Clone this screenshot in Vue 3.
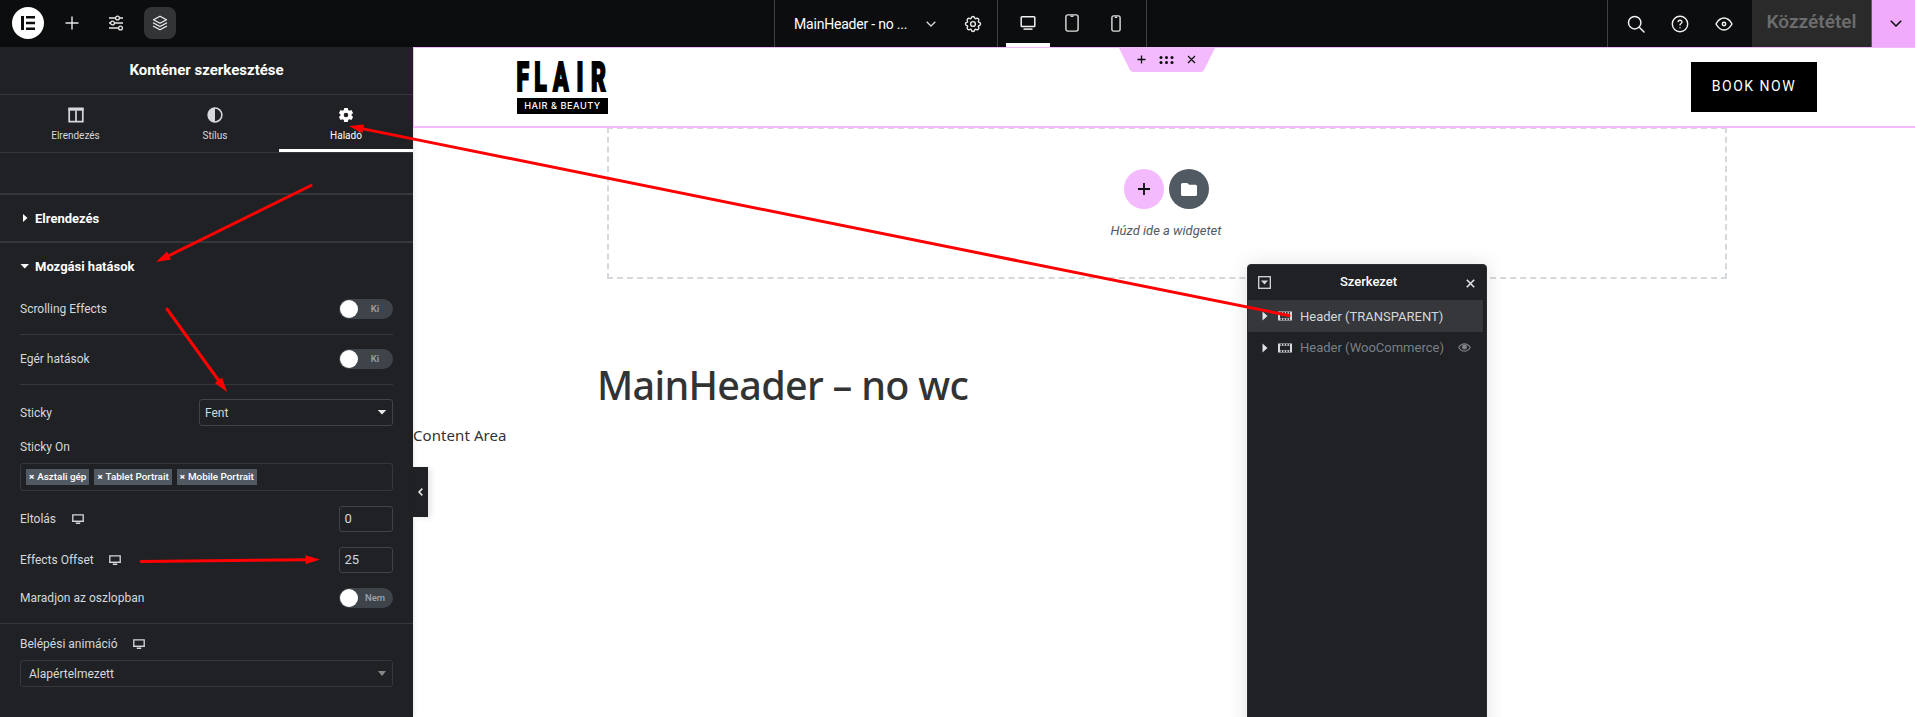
<script setup>
const devices = [
  { name: 'desktop', active: true },
  { name: 'tablet', active: false },
  { name: 'mobile', active: false }
]
const tags = ['Asztali gép', 'Tablet Portrait', 'Mobile Portrait']
const layers = [
  { label: 'Header (TRANSPARENT)', selected: true },
  { label: 'Header (WooCommerce)', selected: false }
]
const arrows = [
  { x1: 1289, y1: 315.5, x2: 349, y2: 126 },
  { x1: 311, y1: 185.5, x2: 156, y2: 262 },
  { x1: 167, y1: 309, x2: 227, y2: 392 },
  { x1: 141, y1: 561.5, x2: 320, y2: 559.5 }
].map((a) => {
  const len = Math.hypot(a.x2 - a.x1, a.y2 - a.y1)
  const ux = (a.x2 - a.x1) / len
  const uy = (a.y2 - a.y1) / len
  const bx = a.x2 - ux * 14.5
  const by = a.y2 - uy * 14.5
  return {
    line: { x1: a.x1, y1: a.y1, x2: bx, y2: by },
    head: `${a.x2},${a.y2} ${bx - uy * 4.5},${by + ux * 4.5} ${bx + uy * 4.5},${by - ux * 4.5}`
  }
})
</script>

<template>
  <div class="editor">
    <header class="topbar">
      <div class="tools">
        <svg class="logo" viewBox="0 0 32 32"><circle cx="16" cy="16" r="16" fill="#fff"/><path d="M9 9h3v14H9zM14 9h9v2.6h-9zM14 14.7h9v2.6h-9zM14 20.4h9V23h-9z" fill="#0c0d0e"/></svg>
        <div class="tool"><svg width="14" height="14" viewBox="0 0 14 14" fill="none" stroke="#e8e8e8" stroke-width="1.4"><path d="M7 .5v13M.5 7h13"/></svg></div>
        <div class="tool"><svg width="16" height="16" viewBox="0 0 16 16" fill="none" stroke="#e8e8e8" stroke-width="1.3"><path d="M1 3h6.500M11.500 3H15M1 8h1.500M6.500 8H15M1 13h9.500M14.500 13h.5"/><circle cx="9.500" cy="3" r="1.900"/><circle cx="4.500" cy="8" r="1.900"/><circle cx="12.500" cy="13" r="1.900"/></svg></div>
        <div class="tool on"><svg width="16" height="16" viewBox="0 0 16 16" fill="none" stroke="#f0f0f0" stroke-width="1.300" stroke-linejoin="round" stroke-linecap="round"><path d="M8 1.200 14.500 4.700 8 8.200 1.500 4.700zM1.500 8 8 11.500 14.500 8M1.500 11.200 8 14.700l6.500-3.500"/></svg></div>
      </div>
      <div class="doc">
        <span class="docname">MainHeader - no ...</span>
        <svg class="chev" width="10" height="6" viewBox="0 0 10 6" fill="none" stroke="#d5d8dc" stroke-width="1.300"><path d="M.7.7 5 5 9.300.7"/></svg>
        <svg width="18" height="18" viewBox="0 0 18 18" fill="none" stroke="#e8e8e8" stroke-width="1.400" stroke-linejoin="round"><path d="M7.300 3.100C7.700.9 10.300.9 10.700 3.100c.2.500.7.700 1.200.5 1.900-1.100 3.700.7 2.600 2.600-.3.400-.1 1 .4 1.100 2.200.4 2.200 3 0 3.400-.5.100-.7.700-.4 1.100 1.100 1.900-.7 3.700-2.600 2.600-.5-.2-1 0-1.200.5-.4 2.200-3 2.200-3.400 0-.2-.5-.7-.7-1.200-.5-1.900 1.100-3.700-.7-2.600-2.600.3-.4.100-1-.4-1.100-2.200-.4-2.200-3 0-3.400.5-.1.700-.7.400-1.100C2.400 4.300 4.200 2.500 6.100 3.600c.5.200 1 0 1.200-.5z"/><circle cx="9" cy="9" r="2.400"/></svg>
      </div>
      <div class="devices">
        <div v-for="d in devices" :key="d.name" class="device" :class="{ active: d.active }">
          <svg v-if="d.name === 'desktop'" width="16" height="14" viewBox="0 0 16 14" fill="none" stroke="#f2f2f2" stroke-width="1.500"><rect x="1.200" y=".8" width="13.600" height="9.700" rx=".8"/><path d="M3.500 13.100h9"/></svg>
          <svg v-else-if="d.name === 'tablet'" width="14" height="18" viewBox="0 0 14 18" fill="none" stroke="#e0e0e0" stroke-width="1.400"><rect x=".9" y=".9" width="12.200" height="16.200" rx="2"/><path d="M5.500 2.200h3"/></svg>
          <svg v-else width="10" height="17" viewBox="0 0 10 17" fill="none" stroke="#e0e0e0" stroke-width="1.400"><rect x=".9" y=".9" width="8.200" height="15.200" rx="1.700"/><path d="M3.800 2.300h2.400"/></svg>
        </div>
      </div>
      <div class="actions">
        <div class="act"><svg width="18" height="18" viewBox="0 0 18 18" fill="none" stroke="#f0f0f0" stroke-width="1.500" stroke-linecap="round"><circle cx="7.700" cy="7.700" r="6.200"/><path d="m12.300 12.300 4.700 4.700"/></svg></div>
        <div class="act"><svg width="18" height="18" viewBox="0 0 18 18" fill="none" stroke="#f0f0f0" stroke-width="1.400" stroke-linecap="round"><circle cx="9" cy="9" r="7.700"/><path d="M7.100 6.600C7.500 4.700 11 4.900 11 7c0 1.500-2 1.400-2 3.100M9 12.700v.1"/></svg></div>
        <div class="act"><svg width="18" height="14" viewBox="0 0 18 14" fill="none" stroke="#f0f0f0" stroke-width="1.500"><path d="M1 7q3.300-5.900 8-5.900T17 7q-3.300 5.900-8 5.900T1 7z"/><circle cx="9" cy="7" r="1.700"/></svg></div>
      </div>
      <div class="publish">Közzététel</div>
      <div class="pubmenu"><svg width="12" height="7" viewBox="0 0 12 7" fill="none" stroke="#0c0d0e" stroke-width="1.500"><path d="M.8.800 6 6 11.200.8"/></svg></div>
    </header>

    <div class="body">
      <aside class="panel">
        <h1 class="ptitle">Konténer szerkesztése</h1>
        <nav class="tabs">
          <div class="tab t1"><svg width="16" height="16" viewBox="0 0 16 16"><path d="M1.200 2h13.600v12.700H1.200zM8 3.500v11" fill="none" stroke="#d5d8dc" stroke-width="1.700"/><path d="M.4.500h15.200v3.200H.4z" fill="#d5d8dc"/></svg><span>Elrendezés</span></div>
          <div class="tab t2"><svg width="16" height="16" viewBox="0 0 16 16"><circle cx="8" cy="8" r="6.900" fill="none" stroke="#d5d8dc" stroke-width="1.500"/><path d="M8 .8a7.200 7.200 0 0 0 0 14.400z" fill="#d5d8dc"/></svg><span>Stílus</span></div>
          <div class="tab t3"><svg width="16" height="16" viewBox="0 0 16 16"><path fill="#fff" fill-rule="evenodd" d="M6.200 1h3.600l.4 2.100 1.200.7 2-.8 1.700 3-1.600 1.400v1.200l1.600 1.400-1.700 3-2-.8-1.200.7-.4 2.100H6.200l-.4-2.100-1.200-.7-2 .8-1.700-3 1.600-1.400V7.400L.9 6l1.700-3 2 .8 1.200-.7zM8 5.700a2.300 2.300 0 1 0 0 4.600 2.300 2.300 0 0 0 0-4.600z"/></svg><span>Haladó</span></div>
        </nav>
        <div class="gap"></div>
        <div class="section"><svg class="caret" width="9" height="8" viewBox="0 0 9 8"><path d="M3 0v8L7.500 4z" fill="#fff"/></svg>Elrendezés</div>
        <div class="section open"><svg class="caret" width="9" height="8" viewBox="0 0 9 8"><path d="M.5 2h8.500L4.750 6.500z" fill="#fff"/></svg>Mozgási hatások</div>
        <div class="controls">
          <div class="row line first"><span>Scrolling Effects</span><div class="switch"><i></i><b>Ki</b></div></div>
          <div class="row line"><span>Egér hatások</span><div class="switch"><i></i><b>Ki</b></div></div>
          <div class="row sticky"><span>Sticky</span><div class="select">Fent<svg width="10" height="5" viewBox="0 0 10 5"><path d="M.7 0h8.600L5 4.500z" fill="#e6e8ea"/></svg></div></div>
          <div class="label stickyon">Sticky On</div>
          <div class="tagbox"><span v-for="t in tags" :key="t" class="tag"><em>×</em>{{ t }}</span></div>
          <div class="row offset"><span>Eltolás</span><svg class="mon" width="12" height="10" viewBox="0 0 12 10"><path d="M.8.800h10.400v6.600H.8z" fill="none" stroke="#d5d8dc" stroke-width="1.300"/><path d="M.2 6.800h11.600v1.300H.2zM3.800 8.500h4.400V10H3.800z" fill="#d5d8dc"/></svg><div class="num">0</div></div>
          <div class="row effects"><span>Effects Offset</span><svg class="mon" width="12" height="10" viewBox="0 0 12 10"><path d="M.8.800h10.400v6.600H.8z" fill="none" stroke="#d5d8dc" stroke-width="1.300"/><path d="M.2 6.800h11.600v1.300H.2zM3.800 8.500h4.400V10H3.800z" fill="#d5d8dc"/></svg><div class="num">25</div></div>
          <div class="row stay"><span>Maradjon az oszlopban</span><div class="switch"><i></i><b>Nem</b></div></div>
        </div>
        <div class="anim">
          <div class="row entrance"><span>Belépési animáció</span><svg class="mon" width="12" height="10" viewBox="0 0 12 10"><path d="M.8.800h10.400v6.600H.8z" fill="none" stroke="#d5d8dc" stroke-width="1.300"/><path d="M.2 6.800h11.600v1.300H.2zM3.800 8.500h4.400V10H3.800z" fill="#d5d8dc"/></svg></div>
          <div class="select wide">Alapértelmezett<svg width="10" height="5" viewBox="0 0 10 5"><path d="M1 0h8L5 5z" fill="#888"/></svg></div>
        </div>
      </aside>

      <main class="canvas">
        <section class="siteheader">
          <div class="brand">
            <svg class="flair" width="92" height="31" viewBox="0 0 92 31"><text transform="scale(.56 1)" x="-1 31 64.300 106.200 132" y="30" font-family="Roboto, sans-serif" font-weight="900" font-size="41" stroke="#000" stroke-width="2">FLAIR</text></svg>
            <span class="tagline">HAIR &amp; BEAUTY</span>
          </div>
          <div class="book">BOOK NOW</div>
        </section>
        <section class="dropzone">
          <div class="circles">
            <div class="circle pink"><svg width="12" height="12" viewBox="0 0 12 12"><path d="M6 0v12M0 6h12" stroke="#0c0d0e" stroke-width="1.800"/></svg></div>
            <div class="circle grey"><svg width="16" height="13" viewBox="0 0 16 13"><path d="M1.500 0h4.700l2 1.800h6.300A1.500 1.500 0 0 1 16 3.300v8.200a1.500 1.500 0 0 1-1.500 1.500h-13A1.500 1.500 0 0 1 0 11.500v-10A1.500 1.500 0 0 1 1.500 0z" fill="#fff"/></svg></div>
          </div>
          <p class="hint">Húzd ide a widgetet</p>
        </section>
        <h2 class="heading">MainHeader – no wc</h2>
        <p class="content">Content Area</p>
      </main>
    </div>

    <svg class="handle" width="98" height="25" viewBox="0 0 98 25"><path d="M.5 0h97L86.500 22q-1 3-4 3h-67q-3 0-4-3z" fill="#f3bafd"/><path d="M23.500 8.500v8M19.500 12.500h8M70 9l7 7M77 9l-7 7" stroke="#0c0d0e" stroke-width="1.300"/><g fill="#0c0d0e"><circle cx="43" cy="10.500" r="1.500"/><circle cx="48.500" cy="10.500" r="1.500"/><circle cx="54" cy="10.500" r="1.500"/><circle cx="43" cy="15.500" r="1.500"/><circle cx="48.500" cy="15.500" r="1.500"/><circle cx="54" cy="15.500" r="1.500"/></g></svg>

    <div class="collapse"><svg width="5" height="8" viewBox="0 0 5 8" fill="none" stroke="#e6e8ea" stroke-width="1.600"><path d="M4.300.6 1 4l3.300 3.400"/></svg></div>

    <div class="navigator">
      <div class="navhead">
        <svg width="13" height="13" viewBox="0 0 13 13"><rect x=".7" y=".7" width="11.600" height="11.600" fill="none" stroke="#d5d8dc" stroke-width="1.300"/><path d="M3 4.500h7L6.500 8.500z" fill="#d5d8dc"/></svg>
        <span>Szerkezet</span>
        <svg class="close" width="9" height="9" viewBox="0 0 9 9"><path d="m.8.800 7.400 7.400M8.200.8.800 8.200" stroke="#e0e2e5" stroke-width="1.600"/></svg>
      </div>
      <div v-for="l in layers" :key="l.label" class="layer" :class="{ selected: l.selected }">
        <svg width="6" height="10" viewBox="0 0 6 10"><path d="M.5.500v9L5.500 5z" fill="#e0e2e5"/></svg>
        <svg class="box" width="14" height="10" viewBox="0 0 14 10"><path d="M0 .5h14v9H0zM2 2.700v4.600h10V2.700z" fill="#d5d8dc" fill-rule="evenodd"/><path d="M2.500 1.800h9.500M2.500 8.200h9.500" stroke="#1f2124" stroke-width="1.600" stroke-dasharray="1.500 1.300"/></svg>
        <span>{{ l.label }}</span>
        <svg v-if="!l.selected" class="eye" width="13" height="9" viewBox="0 0 13 9"><path d="M.7 4.500Q3 .8 6.500.8t5.800 3.700Q10 8.200 6.500 8.200T.7 4.500z" fill="none" stroke="#7d8084" stroke-width="1.200"/><circle cx="6.500" cy="4" r="2.500" fill="#7d8084"/></svg>
      </div>
    </div>

    <svg class="arrows" width="1915" height="717" viewBox="0 0 1915 717">
      <g v-for="(a, i) in arrows" :key="i">
        <line v-bind="a.line" stroke="#f00" stroke-width="3" stroke-linecap="round"/>
        <polygon :points="a.head" fill="#f00"/>
      </g>
    </svg>
  </div>
</template>

<style>
body { overflow: hidden; }
</style>

<style scoped>
* { box-sizing: border-box; }
.editor { position: relative; width: 1915px; height: 717px; overflow: hidden; background: #fff; font-family: Roboto, "Liberation Sans", sans-serif; display: flex; flex-direction: column; }
svg { display: block; flex: none; }
.topbar { height: 47px; flex: none; background: #0c0d0e; display: flex; }
.tools { width: 774px; display: flex; align-items: flex-start; padding: 7px 0 0 12px; gap: 12px; }
.logo { width: 32px; height: 32px; }
.tool { width: 32px; height: 32px; border-radius: 8px; display: flex; align-items: center; justify-content: center; }
.on { background: #333436; }
.doc { width: 223px; border-left: 1px solid #3f4046; padding-left: 19px; display: flex; align-items: center; color: #fff; font-size: 14px; letter-spacing: -.2px; }
.docname { width: 132px; white-space: nowrap; }
.chev { margin-right: 27.500px; }
.devices { width: 150px; border-left: 1px solid #3f4046; border-right: 1px solid #3f4046; padding-left: 8px; display: flex; }
.device { width: 44px; display: flex; align-items: center; justify-content: center; border-bottom: 4px solid transparent; border-top: 3px solid transparent; }
.active { border-bottom-color: #fff; }
.actions { margin-left: auto; width: 145px; border-left: 1px solid #3f4046; padding-left: 6px; display: flex; }
.act { width: 44px; display: flex; align-items: center; justify-content: center; }
.publish { width: 120px; background: #2a2a2a; color: #6c6c6c; font-weight: 600; font-size: 19px; line-height: 44px; text-align: center; border-right: 1px solid #5f5960; white-space: nowrap; }
.pubmenu { width: 43px; background: #f0abfc; display: flex; align-items: center; padding-left: 18px; }
.body { display: flex; flex: 1; min-height: 0; }
.panel { width: 413px; background: #1f2124; color: #d5d8dc; flex: none; font-size: 12px; box-shadow: 0 0 5px rgba(0,0,0,.15); position: relative; }
.ptitle { margin: 0; height: 48px; border-bottom: 1px solid #35373b; color: #fff; font-size: 15px; font-weight: 700; line-height: 46px; text-align: center; }
.tabs { height: 58px; display: flex; border-bottom: 1px solid #35373b; }
.tab { display: flex; flex-direction: column; align-items: center; padding-top: 12px; font-size: 10px; font-weight: 400; gap: 7px; line-height: 12px; }
.t1 { width: 151px; }
.t2 { width: 128px; }
.t3 { width: 134px; color: #fff; border-bottom: 3px solid #fff; }
.gap { height: 40px; }
.section { height: 48px; border-top: 2px solid #35373b; display: flex; align-items: center; padding: 0 0 0 20px; color: #fff; font-weight: 700; font-size: 13px; }
.caret { margin-right: 6px; }
.controls { padding: 0 20px; height: 334px; }
.row { display: flex; align-items: center; }
.line { height: 50px; border-bottom: 1px solid #35373b; padding-bottom: 1px; }
.first { height: 46px; padding-bottom: 5px; }
.switch { margin-left: auto; width: 54px; height: 20px; border-radius: 10px; background: #3f444b; display: flex; align-items: center; padding-left: 1px; }
.switch i { width: 18px; height: 18px; border-radius: 50%; background: #fff; }
.switch b { flex: 1; text-align: center; font-size: 9.500px; line-height: 12px; padding: 0 1px 1px 0; font-weight: 500; color: #9da5ae; }
.sticky { height: 27px; margin-top: 14px; }
.select { margin-left: auto; width: 194px; height: 27px; border: 1px solid #3f444b; border-radius: 3px; padding: 0 5px 0 5px; display: flex; align-items: center; justify-content: space-between; }
.label { line-height: 16px; }
.stickyon { margin: 13px 0 8px; }
.tagbox { height: 28px; border: 1px solid #35373b; border-radius: 3px; display: flex; align-items: center; gap: 5px; padding-left: 5px; }
.tag { height: 16px; background: #515962; color: #fff; font-size: 9.900px; font-weight: 500; line-height: 16px; padding: 0 3px; white-space: nowrap; }
.tag em { font-style: normal; font-weight: 900; margin-right: 3px; }
.offset { height: 26px; margin-top: 15px; }
.mon { margin-left: 15.500px; }
.num { margin-left: auto; width: 54px; height: 26px; border: 1px solid #3f444b; border-radius: 3px; line-height: 24px; padding-left: 4.500px; font-size: 13px; }
.effects { height: 26px; margin-top: 15px; }
.stay { height: 20px; margin-top: 15px; }
.anim { border-top: 1px solid #35373b; padding: 12px 20px 0; }
.entrance { height: 16px; margin-bottom: 8px; }
.wide { width: 373px; padding-left: 8px; border-color: #35373b; }
.canvas { flex: 1; color: #333; }
.siteheader { position: relative; z-index: 1; background: #fff; height: 81px; border-top: 1px solid #f3bafd; border-left: 1px solid #f3bafd; border-bottom: 2px solid #f3bafd; display: flex; justify-content: space-between; padding: 13px 98px 0 103px; }
.brand { width: 91px; }
.flair { overflow: visible; }
.tagline { display: block; width: 91px; height: 16px; margin-top: 6px; background: #000; color: #fff; font-family: Inter, Roboto, sans-serif; font-size: 9.200px; font-weight: 500; line-height: 16px; text-align: center; letter-spacing: .5px; white-space: nowrap; }
.book { margin-top: 1px; width: 126px; height: 50px; background: #000; color: #fff; font-size: 14px; letter-spacing: 1.500px; line-height: 49px; text-align: center; }
.dropzone { margin: -1px 0 0 194px; width: 1120px; height: 152px; border: 2px dashed #d5d8dc; padding: 40px 2px 0 0; display: flex; flex-direction: column; align-items: center; }
.circles { display: flex; gap: 5px; }
.circle { width: 40px; height: 40px; border-radius: 50%; display: flex; align-items: center; justify-content: center; }
.pink { background: #f3bafd; }
.grey { background: #515962; }
.hint { margin: 13px 0 0; font-size: 13px; font-style: italic; line-height: 17px; color: #515962; }
.heading { margin: 76px 0 0 184px; font-family: "Noto Sans", sans-serif; font-weight: 500; font-size: 39.500px; line-height: 60px; letter-spacing: -.7px; white-space: nowrap; }
.content { margin: 8px 0 0; font-family: "Noto Sans", sans-serif; font-size: 15px; line-height: 24px; letter-spacing: .08px; }
.handle { position: absolute; left: 1118px; top: 47px; z-index: 2; }
.collapse { position: absolute; left: 413px; top: 467px; width: 15px; height: 50px; background: #1f2124; display: flex; align-items: center; padding-left: 5px; box-shadow: 3px 1px 5px rgba(0,0,0,.1); }
.navigator { position: absolute; left: 1247px; top: 264px; width: 240px; height: 480px; background: #1f2124; border: 1px solid #2a2c30; border-radius: 4px 4px 0 0; box-shadow: 0 0 20px rgba(0,0,0,.12); color: #d5d8dc; }
.navhead { height: 35px; display: flex; align-items: center; justify-content: space-between; padding: 0 11px 0 10px; color: #fff; font-size: 13px; font-weight: 500; }
.navhead span { padding-bottom: 2px; }
.close { margin-top: 2px; }
.layer { height: 31px; margin-right: 3px; padding-left: 14px; display: flex; align-items: center; font-size: 13px; color: #7d8084; }
.selected { background: #35373b; color: #d5d8dc; height: 32px; }
.box { margin: 0 8px 0 10px; }
.eye { margin-left: 14px; }
.arrows { position: absolute; left: 0; top: 0; z-index: 3; pointer-events: none; }
</style>
